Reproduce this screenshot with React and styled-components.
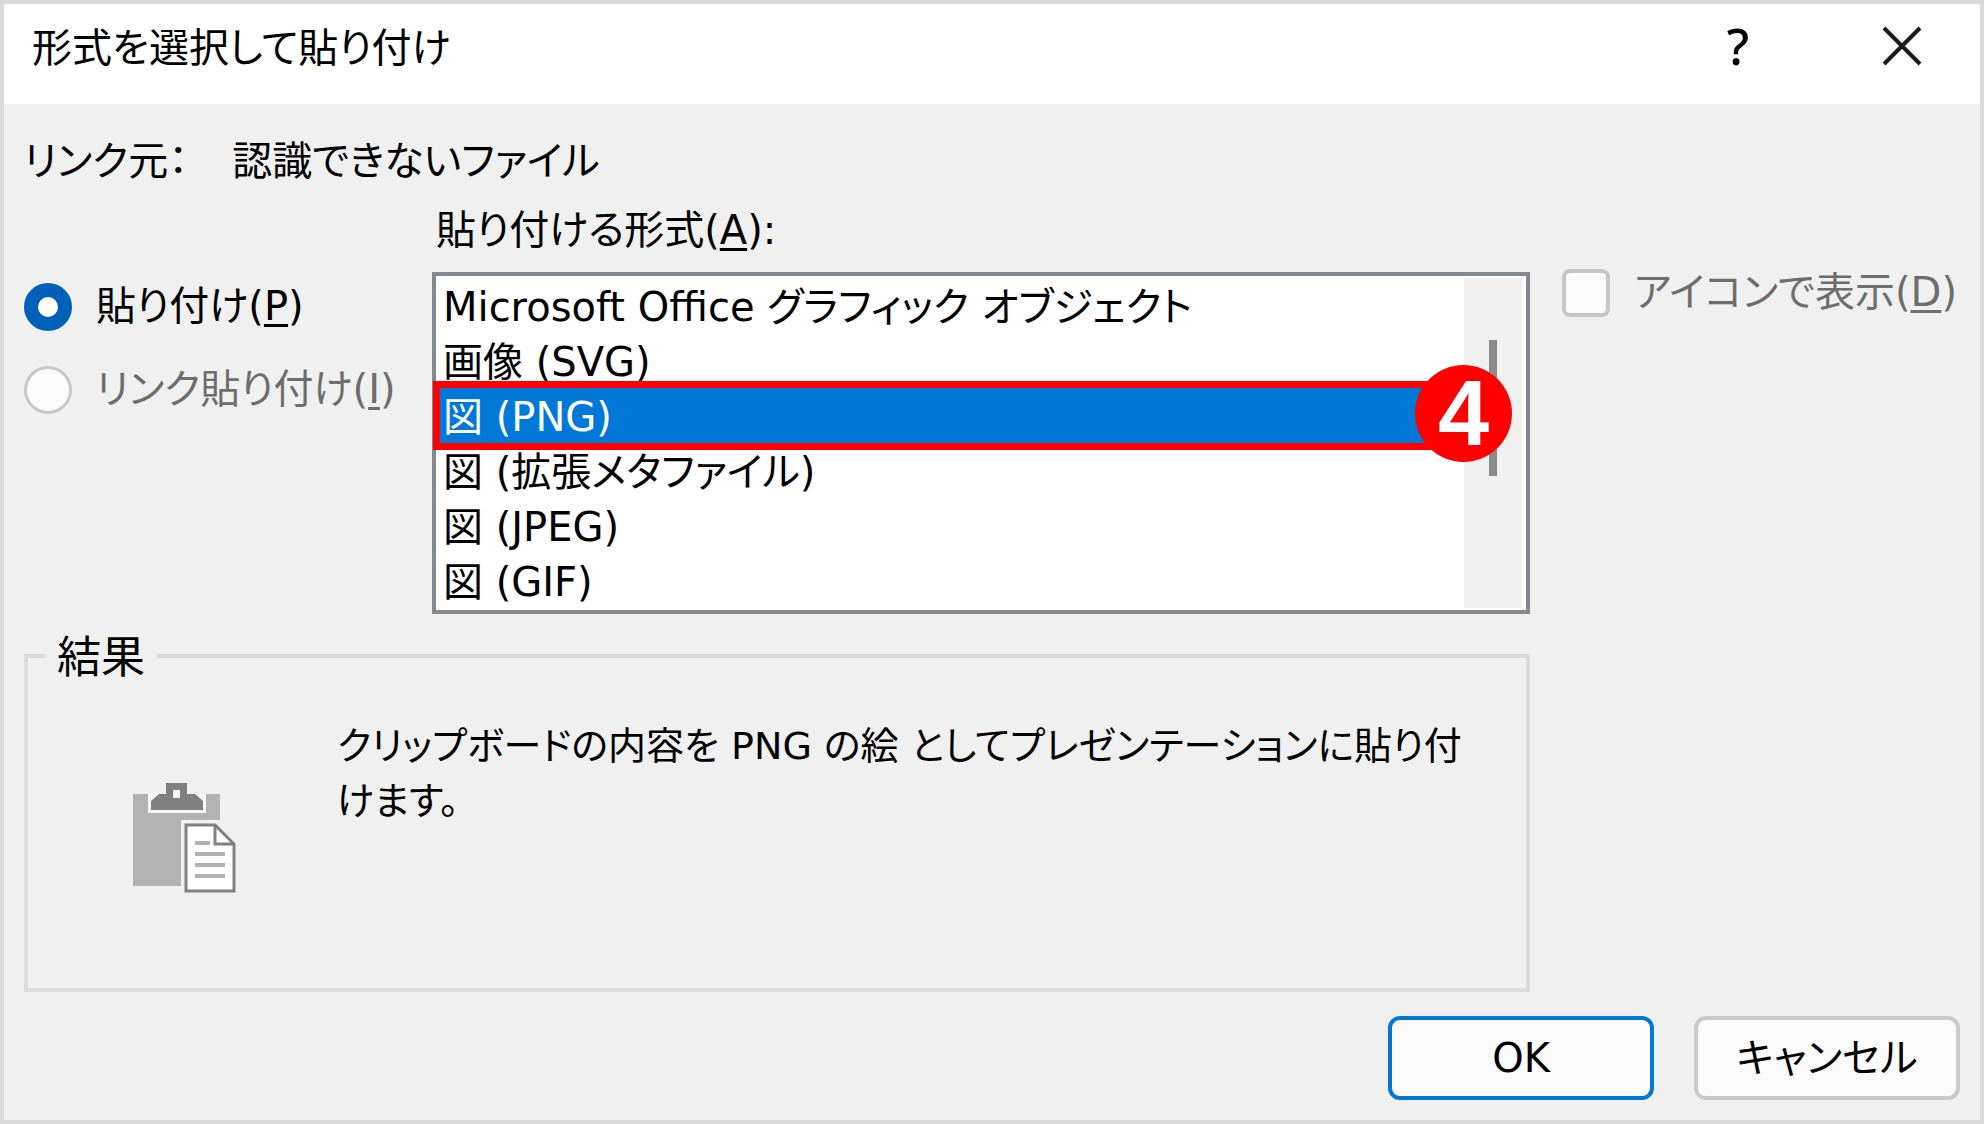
import React, { useState } from "react";
import styled, { createGlobalStyle } from "styled-components";

const formats = [
  "Microsoft Office グラフィック オブジェクト",
  "画像 (SVG)",
  "図 (PNG)",
  "図 (拡張メタファイル)",
  "図 (JPEG)",
  "図 (GIF)",
];

const App = () => {
  const [mode, setMode] = useState("paste");
  const [format, setFormat] = useState(formats[2]);

  return (
    <>
      <GlobalStyle />
      <Dialog role="dialog" aria-labelledby="dialog-title">
        <TitleBar>
          <Title id="dialog-title">形式を選択して貼り付け</Title>
          <TitleButton type="button">?</TitleButton>
          <TitleButton type="button" aria-label="閉じる">
            <CloseIcon />
          </TitleButton>
        </TitleBar>
        <Body>
          <Source>
            <span>リンク元：</span>
            <span>認識できないファイル</span>
          </Source>
          <Columns>
            <Modes>
              <Choice>
                <Radio
                  type="radio"
                  name="mode"
                  checked={mode === "paste"}
                  onChange={() => setMode("paste")}
                />
                <span>
                  貼り付け(<u>P</u>)
                </span>
              </Choice>
              <Choice $disabled>
                <Radio type="radio" name="mode" disabled />
                <span>
                  リンク貼り付け(<u>I</u>)
                </span>
              </Choice>
            </Modes>
            <Formats>
              <FormatLabel htmlFor="format">
                貼り付ける形式(<u>A</u>):
              </FormatLabel>
              <ListBox>
                <List
                  id="format"
                  size={6}
                  value={format}
                  onChange={(e) => setFormat(e.target.value)}
                >
                  {formats.map((name) => (
                    <option key={name} value={name}>
                      {name}
                    </option>
                  ))}
                </List>
                <ScrollTrack>
                  <ScrollThumb />
                </ScrollTrack>
                <Highlight>
                  <Step>4</Step>
                </Highlight>
              </ListBox>
            </Formats>
            <Options>
              <Choice $disabled>
                <Checkbox type="checkbox" disabled />
                <span>
                  アイコンで表示(<u>D</u>)
                </span>
              </Choice>
            </Options>
            <Result>
              <legend>結果</legend>
              <ClipboardIcon />
              <Message>
                クリップボードの内容を PNG の絵 としてプレゼンテーションに貼り付けます。
              </Message>
            </Result>
          </Columns>
          <Footer>
            <Button type="button" $primary>
              OK
            </Button>
            <Button type="button">キャンセル</Button>
          </Footer>
        </Body>
      </Dialog>
    </>
  );
};

export default App;

const CloseIcon = () => (
  <svg width="40" height="40" viewBox="0 0 40 40" aria-hidden="true">
    <path d="M2 2 38 38M38 2 2 38" stroke="#1a1a1a" strokeWidth="4" />
  </svg>
);

const ClipboardIcon = () => (
  <svg width="104" height="112" viewBox="0 0 104 112" aria-hidden="true">
    <path d="M0 11H87V103H0Z" fill="#b2b2b2" />
    <path d="M15 11H73V30H15Z" fill="#f8f8f8" />
    <path d="M33 0H54V11H62L70 18V27H18V18L26 11H33Z" fill="#808080" />
    <path d="M40 7H47V15H40Z" fill="#f8f8f8" />
    <path d="M48 37H90V103H48Z" fill="#f0f0f0" />
    <path
      d="M53 42H82L101 61V108H53Z"
      fill="#fff"
      stroke="#808080"
      strokeWidth="3"
    />
    <path d="M82 42V61H101" fill="none" stroke="#808080" strokeWidth="3" />
    <path
      d="M62 60H77M62 71H92M62 82H92M62 93H92"
      stroke="#b2b2b2"
      strokeWidth="4"
    />
  </svg>
);

const GlobalStyle = createGlobalStyle`
  * {
    box-sizing: border-box;
  }
  body {
    margin: 0;
    background-color: #f0f0f0;
  }
  body, button, select {
    font-family: "DejaVu Sans", "Noto Sans CJK JP", sans-serif;
    font-size: 40px;
    line-height: 55px;
    font-feature-settings: "palt";
    color: #000;
  }
  u {
    text-decoration-thickness: 3px;
    text-underline-offset: 4px;
  }
`;

const Dialog = styled.div`
  display: flex;
  flex-direction: column;
  min-height: 100vh;
  border: 4px solid #d9d9d9;
  background-color: #f0f0f0;
`;

const TitleBar = styled.header`
  display: flex;
  align-items: center;
  height: 100px;
  padding: 0 38px 12px 28px;
  gap: 84px;
  background-color: #fff;
`;

const Title = styled.h1`
  flex: 1;
  margin: 0;
  font-size: 40px;
  font-weight: 400;
`;

const TitleButton = styled.button`
  display: flex;
  align-items: center;
  justify-content: center;
  width: 80px;
  height: 64px;
  padding: 0 0 4px;
  border: none;
  background: none;
  font-family: "Noto Sans", sans-serif;
  font-size: 50px;
  font-weight: 500;
`;

const Body = styled.main`
  display: flex;
  flex: 1;
  flex-direction: column;
  padding: 30px 20px 20px;
`;

const Source = styled.div`
  display: flex;
  gap: 44px;
`;

const Columns = styled.div`
  display: grid;
  grid-template-columns: 408px 1fr 430px;
  margin-top: 14px;
`;

const Modes = styled.div`
  display: flex;
  flex-direction: column;
  gap: 28px;
  padding-top: 76px;
`;

const Formats = styled.div`
  display: flex;
  flex-direction: column;
  gap: 14px;
`;

const Options = styled.div`
  padding: 62px 0 0 32px;
`;

const Choice = styled.label`
  display: flex;
  align-items: center;
  gap: 24px;
  white-space: nowrap;
  color: ${(props) => (props.$disabled ? "#6d6d6d" : "#000")};
`;

const Radio = styled.input`
  flex: none;
  appearance: none;
  width: 48px;
  height: 48px;
  margin: 0;
  border: 3px solid #c8c8c8;
  border-radius: 50%;
  background-color: #fafafa;
  &:checked {
    border: 14px solid #005fb8;
    background-color: #fff;
  }
`;

const Checkbox = styled.input`
  flex: none;
  appearance: none;
  width: 48px;
  height: 48px;
  margin: 0;
  border: 4px solid #c6c6c6;
  border-radius: 8px;
  background-color: #fafafa;
`;

const FormatLabel = styled.label`
  padding-left: 4px;
`;

const ListBox = styled.div`
  position: relative;
  display: flex;
  padding: 2px 4px 2px 0;
  border: 4px solid #838991;
  background-color: #fff;
`;

const List = styled.select`
  flex: 1;
  min-width: 0;
  height: 330px;
  padding: 0;
  border: none;
  outline: none;
  background-color: #fff;
  overflow: hidden;
  scrollbar-width: none;
  option {
    display: flex;
    align-items: center;
    height: 55px;
    min-height: 55px;
    padding: 0 7px 4px;
    color: #000;
  }
  option:checked {
    background: #0078d7 linear-gradient(#0078d7, #0078d7);
    color: #fff;
    -webkit-text-fill-color: #fff;
  }
`;

const ScrollTrack = styled.div`
  display: flex;
  justify-content: center;
  align-items: flex-start;
  width: 58px;
  padding-top: 62px;
  background-color: #f0f0f0;
`;

const ScrollThumb = styled.div`
  width: 8px;
  height: 136px;
  background-color: #8a8a8a;
`;

const Highlight = styled.div`
  position: absolute;
  top: 105px;
  left: -3px;
  right: 63px;
  height: 69px;
  border: 7px solid #f00;
  pointer-events: none;
`;

const Step = styled.span`
  position: absolute;
  top: -23px;
  right: -56px;
  display: flex;
  align-items: center;
  justify-content: center;
  width: 97px;
  height: 97px;
  border-radius: 50%;
  background-color: #f00;
  color: #fff;
  font-family: "Liberation Sans", sans-serif;
  font-size: 92px;
  font-weight: 700;
`;

const Result = styled.fieldset`
  grid-column: 1 / 3;
  display: flex;
  align-items: flex-start;
  gap: 100px;
  min-width: 0;
  min-height: 366px;
  margin: 12px 0 0;
  padding: 34px 40px 0 105px;
  border: 4px solid #dcdcdc;
  legend {
    margin-left: -88px;
    padding: 4px 12px 0;
    font-size: 44px;
  }
  svg {
    flex: none;
    margin-top: 64px;
  }
`;

const Message = styled.p`
  flex: 1;
  margin: 0;
  font-size: 38px;
`;

const Footer = styled.footer`
  display: flex;
  justify-content: flex-end;
  gap: 40px;
  margin-top: auto;
`;

const Button = styled.button`
  width: 266px;
  height: 84px;
  border: ${(props) =>
    props.$primary ? "4px solid #0078d4" : "4px solid #cacaca"};
  border-radius: 12px;
  background-color: #fbfbfb;
`;
